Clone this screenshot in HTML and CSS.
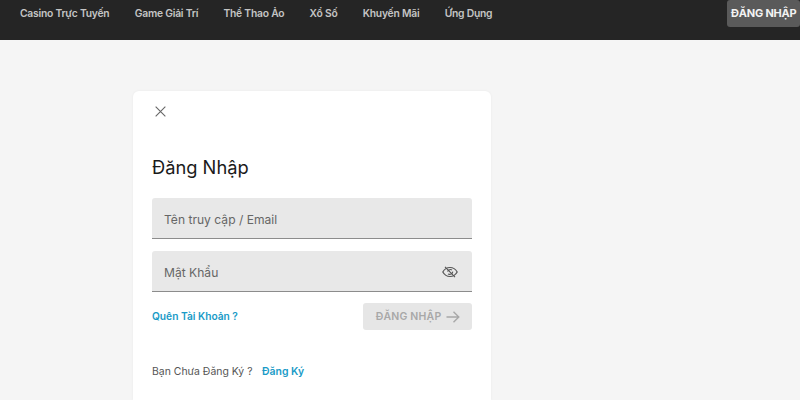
FILE: index.html
```html
<!DOCTYPE html>
<html lang="vi">
<head>
<meta charset="utf-8">
<title>Đăng Nhập</title>
<link rel="stylesheet" href="styles.css">
</head>
<body>
<header class="topbar">
  <nav class="nav">
    <a class="nav-link">Casino Trực Tuyến</a>
    <a class="nav-link">Game Giải Trí</a>
    <a class="nav-link">Thể Thao Ảo</a>
    <a class="nav-link">Xổ Số</a>
    <a class="nav-link">Khuyến Mãi</a>
    <a class="nav-link">Ứng Dụng</a>
  </nav>
  <a class="login-top">ĐĂNG NHẬP</a>
</header>
<main class="page">
  <section class="card">
    <button class="close" aria-label="Đóng">
      <svg width="11" height="11" viewBox="0 0 12 12"><path d="M.7.7l10.6 10.6M11.300.7L.7 11.300" fill="none" stroke="#666" stroke-width="1.200"/></svg>
    </button>
    <h1 class="title">Đăng Nhập</h1>
    <div class="field"><span class="placeholder">Tên truy cập / Email</span></div>
    <div class="field"><span class="placeholder">Mật Khẩu</span>
      <svg class="eye" width="16" height="12" viewBox="0 0 16 12"><path d="M.8 6C2.500 3 5 1.500 8 1.500S13.500 3 15.200 6C13.500 9 11 10.500 8 10.500S2.500 9 .8 6Z" fill="none" stroke="#555" stroke-width="1.200"/><path d="M3 .8l10 10.400M5.500 5.500c1-2 3-2.400 4.500-1.500M6 8c2 1 4.500 0 4.800-2.400" fill="none" stroke="#555" stroke-width="1.100"/></svg>
    </div>
    <div class="actions">
      <a class="forgot">Quên Tài Khoản ?</a>
      <button class="submit">ĐĂNG NHẬP
        <svg width="14" height="12" viewBox="0 0 14 12"><path d="M.5 6h12.300M7.500.8L12.800 6 7.500 11.200" fill="none" stroke="#a8a8a8" stroke-width="1.400"/></svg>
      </button>
    </div>
    <p class="signup">Bạn Chưa Đăng Ký ?<a class="signup-link">Đăng Ký</a></p>
  </section>
</main>
</body>
</html>
```
FILE: styles.css
```css
* { box-sizing: border-box; }
html, body { height: 100%; }
body { margin: 0; background: #f5f5f5; font-family: Inter, "Liberation Sans", sans-serif; overflow: hidden; }
.topbar { height: 40px; background: #252525; display: flex; justify-content: space-between; align-items: flex-start; padding-left: 20px; padding-right: 0; }
.nav { display: flex; gap: 25.300px; padding-top: 6px; }
.nav-link { color: #c4c4c4; font-size: 10.300px; font-weight: 600; line-height: 15px; letter-spacing: -0.220px; white-space: nowrap; }
.login-top { background: #5a5a5a; color: #f2f2f2; font-size: 11px; font-weight: 700; height: 27px; line-height: 27px; padding: 0 4px; border-radius: 3px; white-space: nowrap; width: 73px; text-align: center; letter-spacing: -0.200px; }
.page { padding: 51px 0 0 133px; }
.card { width: 358px; height: 309px; background: #fff; border-radius: 6px 6px 0 0; padding: 13px 19px 0; box-shadow: 0 0 3px rgba(0,0,0,.05); }
.close { display: block; border: 0; background: none; padding: 0; margin: 0 0 0 3px; height: 14px; }
.close svg { display: block; }
.title { margin: 37px 0 18px; font-size: 18.300px; font-weight: 400; line-height: 25px; color: #1a1a1a; }
.field { height: 41px; background: #e8e8e8; border-bottom: 1px solid #8c8c8c; border-radius: 3px 3px 0 0; margin-bottom: 12px; display: flex; align-items: center; justify-content: space-between; padding: 2px 14px 0 12px; }
.placeholder { font-size: 12.100px; color: #666; }
.actions { display: flex; justify-content: space-between; align-items: center; height: 27px; margin-top: -1px; }
.forgot { color: #1a9bc7; font-size: 10.200px; font-weight: 600; padding-bottom: 2px; }
.submit { width: 109px; height: 27px; border: 0; border-radius: 3px; background: #e6e6e6; color: #a8a8a8; font: 600 10.500px Inter, "Liberation Sans", sans-serif; display: flex; align-items: center; justify-content: center; gap: 5px; padding: 0 0 0 1px; letter-spacing: .2px; }
.signup { margin: 35px 0 0; font-size: 10.450px; line-height: 14px; color: #555; }
.signup-link { color: #1a9bc7; font-weight: 600; margin-left: 9.500px; }
```
